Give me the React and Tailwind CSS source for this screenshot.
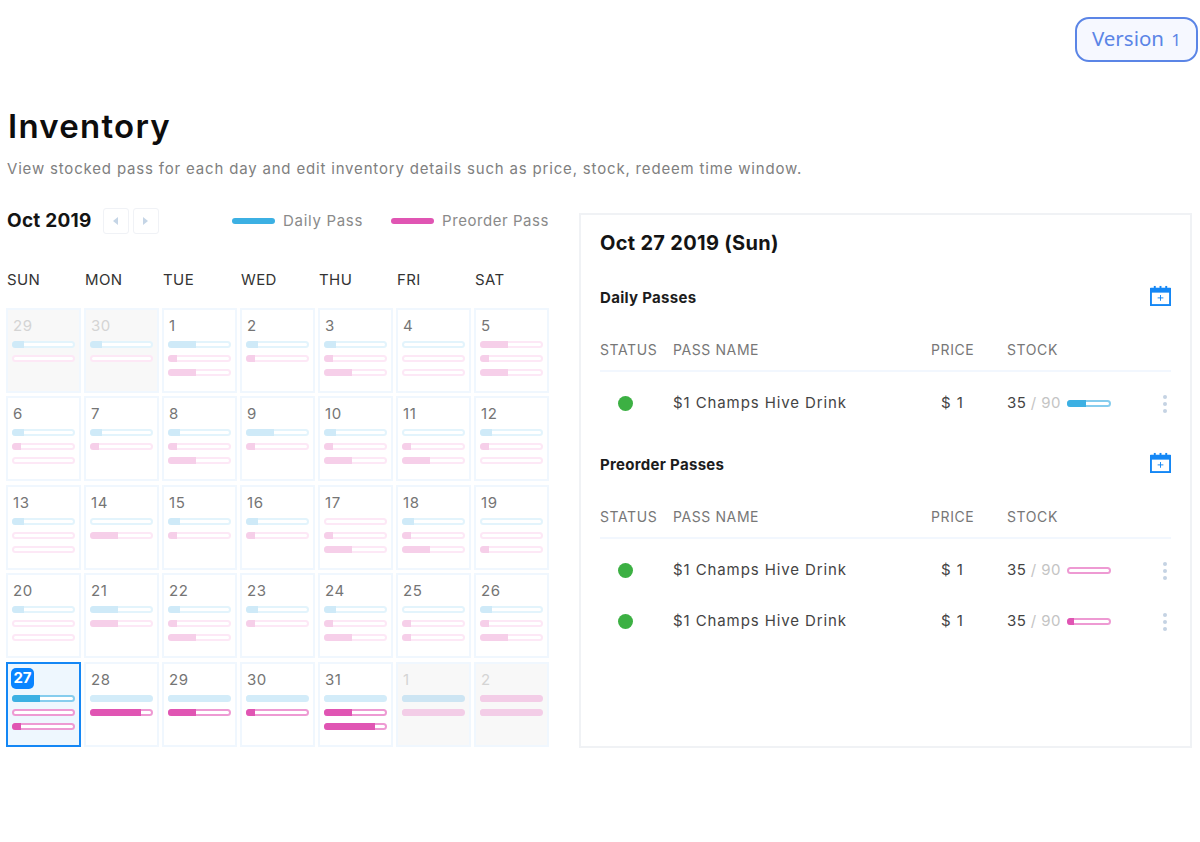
const weekDays = ["SUN", "MON", "TUE", "WED", "THU", "FRI", "SAT"];

// each bar is [color, percent]; b = blue, p = pink
const days = [
  { n: 29, muted: true, bars: [["b", 18], ["p", 0]] },
  { n: 30, muted: true, bars: [["b", 18], ["p", 0]] },
  { n: 1, bars: [["b", 45], ["p", 14], ["p", 45]] },
  { n: 2, bars: [["b", 18], ["p", 14]] },
  { n: 3, bars: [["b", 18], ["p", 14], ["p", 45]] },
  { n: 4, bars: [["b", 0], ["p", 0], ["p", 0]] },
  { n: 5, bars: [["p", 45], ["p", 14], ["p", 45]] },
  { n: 6, bars: [["b", 18], ["p", 14], ["p", 0]] },
  { n: 7, bars: [["b", 18], ["p", 14]] },
  { n: 8, bars: [["b", 18], ["p", 14], ["p", 45]] },
  { n: 9, bars: [["b", 45], ["p", 14]] },
  { n: 10, bars: [["b", 18], ["p", 14], ["p", 45]] },
  { n: 11, bars: [["b", 0], ["p", 14], ["p", 45]] },
  { n: 12, bars: [["b", 18], ["p", 14], ["p", 0]] },
  { n: 13, bars: [["b", 18], ["p", 0], ["p", 0]] },
  { n: 14, bars: [["b", 0], ["p", 45]] },
  { n: 15, bars: [["b", 18], ["p", 14]] },
  { n: 16, bars: [["b", 18], ["p", 14]] },
  { n: 17, bars: [["p", 0], ["p", 14], ["p", 45]] },
  { n: 18, bars: [["b", 18], ["p", 14], ["p", 45]] },
  { n: 19, bars: [["b", 0], ["p", 0], ["p", 14]] },
  { n: 20, bars: [["b", 18], ["p", 0], ["p", 0]] },
  { n: 21, bars: [["b", 45], ["p", 45]] },
  { n: 22, bars: [["b", 18], ["p", 14], ["p", 45]] },
  { n: 23, bars: [["b", 18], ["p", 14]] },
  { n: 24, bars: [["b", 18], ["p", 14], ["p", 45]] },
  { n: 25, bars: [["b", 0], ["p", 14], ["p", 14]] },
  { n: 26, bars: [["b", 18], ["p", 14], ["p", 45]] },
  { n: 27, selected: true, strong: true, bars: [["b", 45], ["p", 0], ["p", 14]] },
  { n: 28, strong: true, bars: [["f", 100], ["p", 85]] },
  { n: 29, strong: true, bars: [["f", 100], ["p", 45]] },
  { n: 30, strong: true, bars: [["f", 100], ["p", 14]] },
  { n: 31, strong: true, bars: [["f", 100], ["p", 45], ["p", 85]] },
  { n: 1, muted: true, bars: [["mb", 100], ["mp", 100]] },
  { n: 2, muted: true, bars: [["mp", 100], ["mp", 100]] },
];

const soft = {
  b: { track: "border-[#e3f4fc] bg-white", fill: "bg-[#cfeaf8]" },
  p: { track: "border-[#fde8f6] bg-white", fill: "bg-[#f6cfe9]" },
  f: { track: "border-[#d3ecf9] bg-[#d3ecf9]", fill: "bg-[#d3ecf9]" },
  mb: { track: "border-[#cde5f3] bg-[#cde5f3]", fill: "bg-[#cde5f3]" },
  mp: { track: "border-[#f3cde7] bg-[#f3cde7]", fill: "bg-[#f3cde7]" },
};

const strong = {
  b: { track: "border-[#86cdee] bg-white", fill: "bg-[#3cb0e3]" },
  p: { track: "border-[#ee9ad3] bg-white", fill: "bg-[#e055b3]" },
  f: soft.f,
};

function Bar({ color, percent, isStrong, className }) {
  const c = (isStrong ? strong : soft)[color];
  return (
    <div className={`h-[7px] rounded-full border-2 ${c.track} ${className}`}>
      {percent > 0 && (
        <div
          className={`-m-[2px] h-[7px] rounded-l-full rounded-r-[1px] ${c.fill}`}
          style={{ width: `calc(${percent}% + 1px)` }}
        />
      )}
    </div>
  );
}

function DayCell({ day }) {
  let box = "border-[#f0f7fe] bg-white";
  if (day.muted) box = "border-[#f0f7fe] bg-[#f8f8f8]";
  if (day.selected) box = "border-[#1487f5] bg-[#eef7fe]";

  return (
    <div className={`h-[85px] border-2 px-[4px] ${box}`}>
      <div className="flex h-[27px] items-end">
        {day.selected ? (
          <span className="-ml-[1px] mb-[2px] flex h-[21px] w-[23px] items-center justify-center rounded-[5px] bg-[#0a84ff] text-[15px] font-bold text-white">
            {day.n}
          </span>
        ) : (
          <span className={`pl-[1px] text-[15px] leading-[22px] tracking-[0.6px] ${day.muted ? "text-[#d4d4d4]" : "text-[#757575]"}`}>
            {day.n}
          </span>
        )}
      </div>
      <div className="mt-[4px] flex flex-col gap-[7px]">
        {day.bars.map(([color, percent], i) => (
          <Bar key={i} color={color} percent={percent} isStrong={day.strong} className="w-full" />
        ))}
      </div>
    </div>
  );
}

function CalendarPlus() {
  return (
    <svg className="-mt-[5px]" width="21" height="21" viewBox="0 0 22 22" fill="none">
      <rect x="1" y="4" width="20" height="17" stroke="#1487f5" strokeWidth="2" />
      <rect x="1" y="3" width="20" height="5" fill="#1487f5" />
      <rect x="4" y="1" width="2" height="3" fill="#1487f5" />
      <rect x="10" y="1" width="2" height="3" fill="#1487f5" />
      <rect x="16" y="1" width="2" height="3" fill="#1487f5" />
      <path d="M11 10.5v6M8 13.5h6" stroke="#1487f5" strokeWidth="1" />
    </svg>
  );
}

function Dots() {
  return (
    <div className="flex flex-col gap-[3px]">
      <span className="h-[4px] w-[4px] rounded-full bg-[#c5d3e3]" />
      <span className="h-[4px] w-[4px] rounded-full bg-[#c5d3e3]" />
      <span className="h-[4px] w-[4px] rounded-full bg-[#c5d3e3]" />
    </div>
  );
}

const columns = "grid grid-cols-[73px_258px_76px_1fr] items-center";

function PassRow({ color, percent }) {
  return (
    <div className={`${columns} h-[51px] text-[15px] tracking-[0.9px] text-[#444444]`}>
      <span className="ml-[18px] h-[15px] w-[15px] rounded-full bg-[#3cb043]" />
      <span>$1 Champs Hive Drink</span>
      <span className="pl-[10px]">$ 1</span>
      <div className="flex items-center">
        <span className="w-[60px] whitespace-nowrap tracking-[0.4px]">
          35 <span className="text-[#c4c4c4]">/ 90</span>
        </span>
        <Bar color={color} percent={percent} isStrong className="w-[44px]" />
        <span className="ml-auto mr-[4px]">
          <Dots />
        </span>
      </div>
    </div>
  );
}

function PassSection({ title, rows, className }) {
  return (
    <div className={className}>
      <div className="flex h-[24px] items-center justify-between">
        <h3 className="text-[15px] font-bold tracking-[0.3px] text-[#1c1c1c]">{title}</h3>
        <CalendarPlus />
      </div>
      <div className={`${columns} mt-[29px] h-[21px] text-[14px] tracking-[0.6px] text-[#777777]`}>
        <span>STATUS</span>
        <span>PASS NAME</span>
        <span>PRICE</span>
        <span>STOCK</span>
      </div>
      <div className="mt-[10px] h-[2px] bg-[#f2f7fe]" />
      <div className="pt-[6px]">{rows}</div>
    </div>
  );
}

export default function App() {
  return (
    <div className="h-[842px] bg-white font-['Inter','Liberation_Sans',sans-serif]">
      <div className="flex justify-end pr-[2px] pt-[17px]">
        <button className="h-[45px] w-[123px] rounded-[14px] border-2 border-[#5b85e6] bg-[#f6f8ff] pb-[2px] font-['Noto_Sans',sans-serif] text-[20.5px] text-[#5b85e6]">
          Version <span className="ml-[2px] text-[17px]">1</span>
        </button>
      </div>

      <h1 className="ml-[8px] mt-[42px] h-[44px] text-[33px] font-semibold leading-[44px] tracking-[1.25px] text-[#0d0d0d]">
        Inventory
      </h1>
      <p className="ml-[7px] mt-[11px] h-[20px] text-[15px] leading-[20px] tracking-[0.82px] text-[#808080]">
        View stocked pass for each day and edit inventory details such as price, stock, redeem time window.
      </p>

      <div className="mt-[29px] flex items-start">
        <div className="ml-[6px] w-[543px]">
          <div className="flex h-[26px] items-center">
            <span className="ml-[1px] text-[19px] font-bold tracking-[0.25px] text-[#141414]">Oct 2019</span>
            <div className="ml-[11px] flex gap-[4px]">
              <span className="flex h-[26px] w-[26px] items-center justify-center rounded-[3px] border border-[#f0f2f6]">
                <span className="h-0 w-0 border-y-[4px] border-r-[5px] border-y-transparent border-r-[#c5d5e6]" />
              </span>
              <span className="flex h-[26px] w-[26px] items-center justify-center rounded-[3px] border border-[#f0f2f6]">
                <span className="h-0 w-0 border-y-[4px] border-l-[5px] border-y-transparent border-l-[#c5d5e6]" />
              </span>
            </div>
            <span className="ml-auto h-[6px] w-[43px] rounded-full bg-[#3cb0e3]" />
            <span className="ml-[8px] text-[15px] tracking-[0.7px] text-[#8a8a8a]">Daily Pass</span>
            <span className="ml-[28px] h-[6px] w-[43px] rounded-full bg-[#e055b3]" />
            <span className="ml-[8px] text-[15px] tracking-[0.55px] text-[#8a8a8a]">Preorder Pass</span>
          </div>

          <div className="mt-[35px] grid grid-cols-[repeat(7,78px)] pl-[1px] text-[15px] tracking-[0.4px] text-[#333333]">
            {weekDays.map((d) => (
              <span key={d}>{d}</span>
            ))}
          </div>

          <div className="mt-[16px] grid grid-cols-[repeat(7,75px)] gap-x-[3px] gap-y-[3.5px]">
            {days.map((day, i) => (
              <DayCell key={i} day={day} />
            ))}
          </div>
        </div>

        <div className="ml-[30px] mt-[5px] h-[535px] w-[613px] border-2 border-[#f0f2f5] px-[19px] pt-[14px]">
          <h2 className="text-[20px] font-bold leading-[28px] tracking-[0.3px] text-[#141414]">Oct 27 2019 (Sun)</h2>
          <PassSection
            title="Daily Passes"
            className="mt-[29px]"
            rows={<PassRow color="b" percent={45} />}
          />
          <PassSection
            title="Preorder Passes"
            className="mt-[24px]"
            rows={
              <>
                <PassRow color="p" percent={0} />
                <PassRow color="p" percent={14} />
              </>
            }
          />
        </div>
      </div>
    </div>
  );
}
